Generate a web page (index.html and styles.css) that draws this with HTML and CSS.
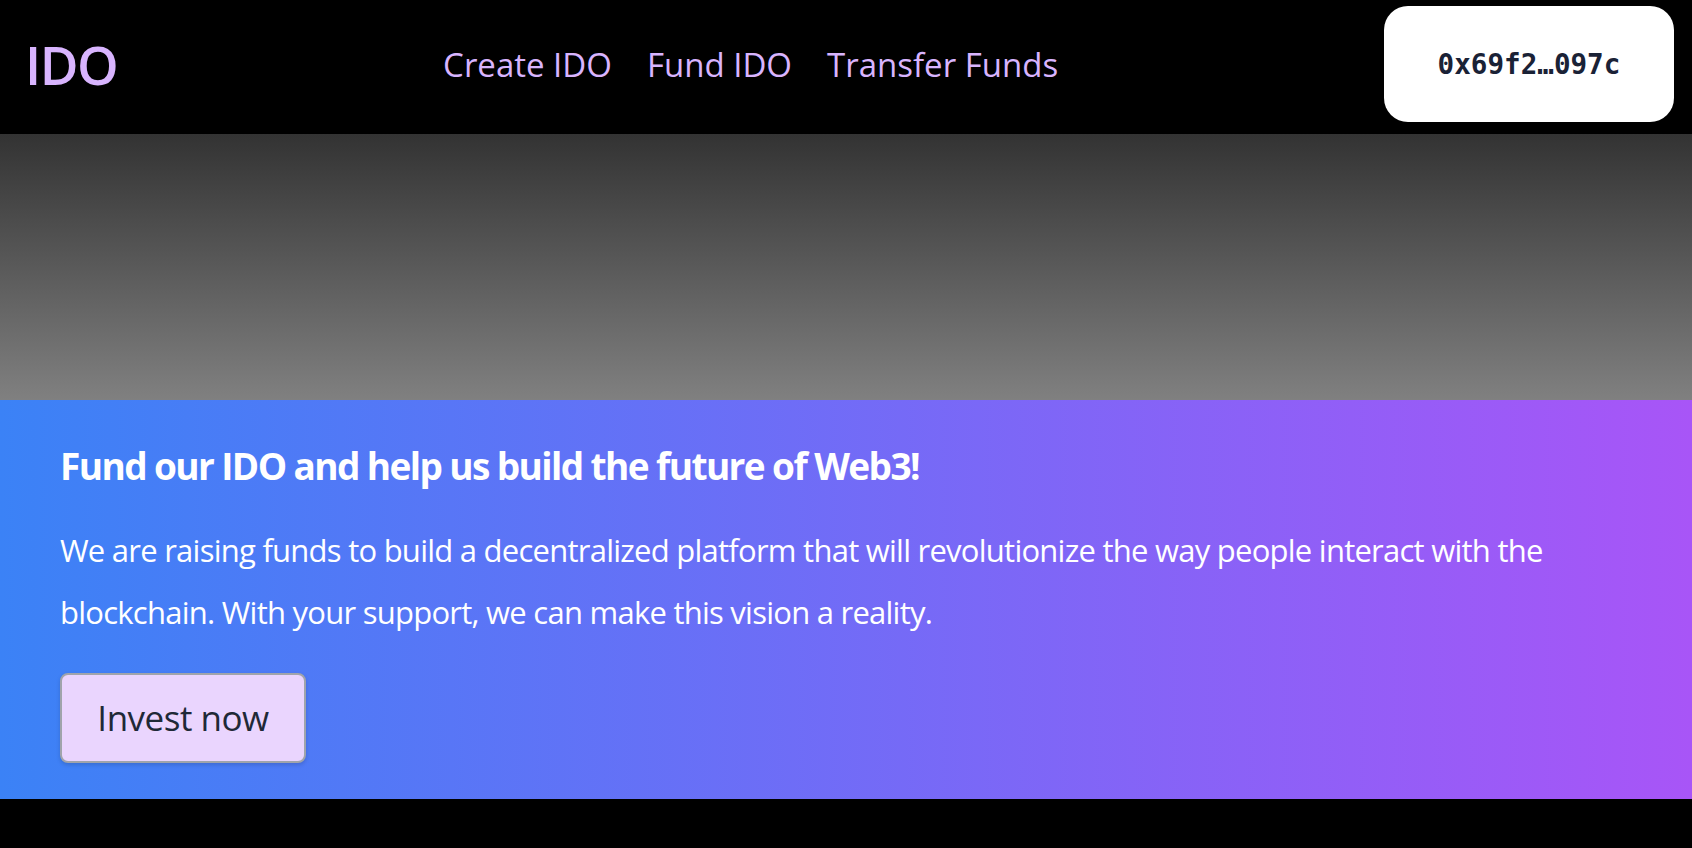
FILE: index.html
```html
<!DOCTYPE html>
<html lang="en">
<head>
<meta charset="utf-8">
<title>IDO</title>
<link rel="stylesheet" href="styles.css">
</head>
<body>
<header class="topbar">
  <a class="logo" href="#">IDO</a>
  <nav class="nav">
    <a href="#">Create IDO</a>
    <a href="#">Fund IDO</a>
    <a href="#">Transfer Funds</a>
  </nav>
  <button class="wallet">0x69f2…097c</button>
</header>
<div class="banner"></div>
<section class="hero">
  <h1 class="hero-title">Fund our IDO and help us build the future of Web3!</h1>
  <p class="hero-text">We are raising funds to build a decentralized platform that will revolutionize the way people interact with the blockchain. With your support, we can make this vision a reality.</p>
  <button class="invest">Invest now</button>
</section>
</body>
</html>
```
FILE: styles.css
```css
* { box-sizing: border-box; }
html, body { margin: 0; padding: 0; }
body {
  background: #000;
  font-family: "Open Sans", "Noto Sans", sans-serif;
  color: #fff;
}
.topbar {
  height: 134px;
  display: flex;
  align-items: center;
  justify-content: space-between;
  padding: 6px 18px 12px 25px;
  background: #000;
}
.logo {
  color: #d8b4fe;
  font-size: 53px;
  font-weight: 600;
  text-decoration: none;
  letter-spacing: -1.5px;
  line-height: 1;
}
.nav {
  display: flex;
  gap: 35px;
}
.nav a {
  color: #d8b4fe;
  font-size: 33px;
  text-decoration: none;
  letter-spacing: 0;
}
.wallet {
  width: 290px;
  height: 116px;
  border: none;
  border-radius: 24px;
  background: #fff;
  color: #1a2236;
  font-family: "DejaVu Sans Mono", monospace;
  font-weight: bold;
  font-size: 27.6px;
  cursor: pointer;
}
.banner {
  height: 266px;
  background: linear-gradient(to bottom, #333333, #808080);
}
.hero {
  background: linear-gradient(to right, #3b82f6, #a855f7);
  padding: 40px 60px 36px;
  height: 399px;
}
.hero-title {
  margin: 0 0 27px;
  font-size: 37px;
  font-weight: 700;
  letter-spacing: -1.6px;
  line-height: 1.4;
}
.hero-text {
  margin: 0 0 30px;
  font-size: 31px;
  line-height: 62px;
  letter-spacing: -0.75px;
}
.invest {
  width: 246px;
  height: 90px;
  background: #ead5fe;
  border: 2px solid #a0a4ab;
  border-radius: 8px;
  color: #1f2937;
  font-family: "Open Sans", sans-serif;
  font-size: 35px;
  font-weight: 500;
  letter-spacing: -0.5px;
  box-shadow: 0 2px 4px rgba(0,0,0,0.15);
  cursor: pointer;
  padding: 0;
}
```
